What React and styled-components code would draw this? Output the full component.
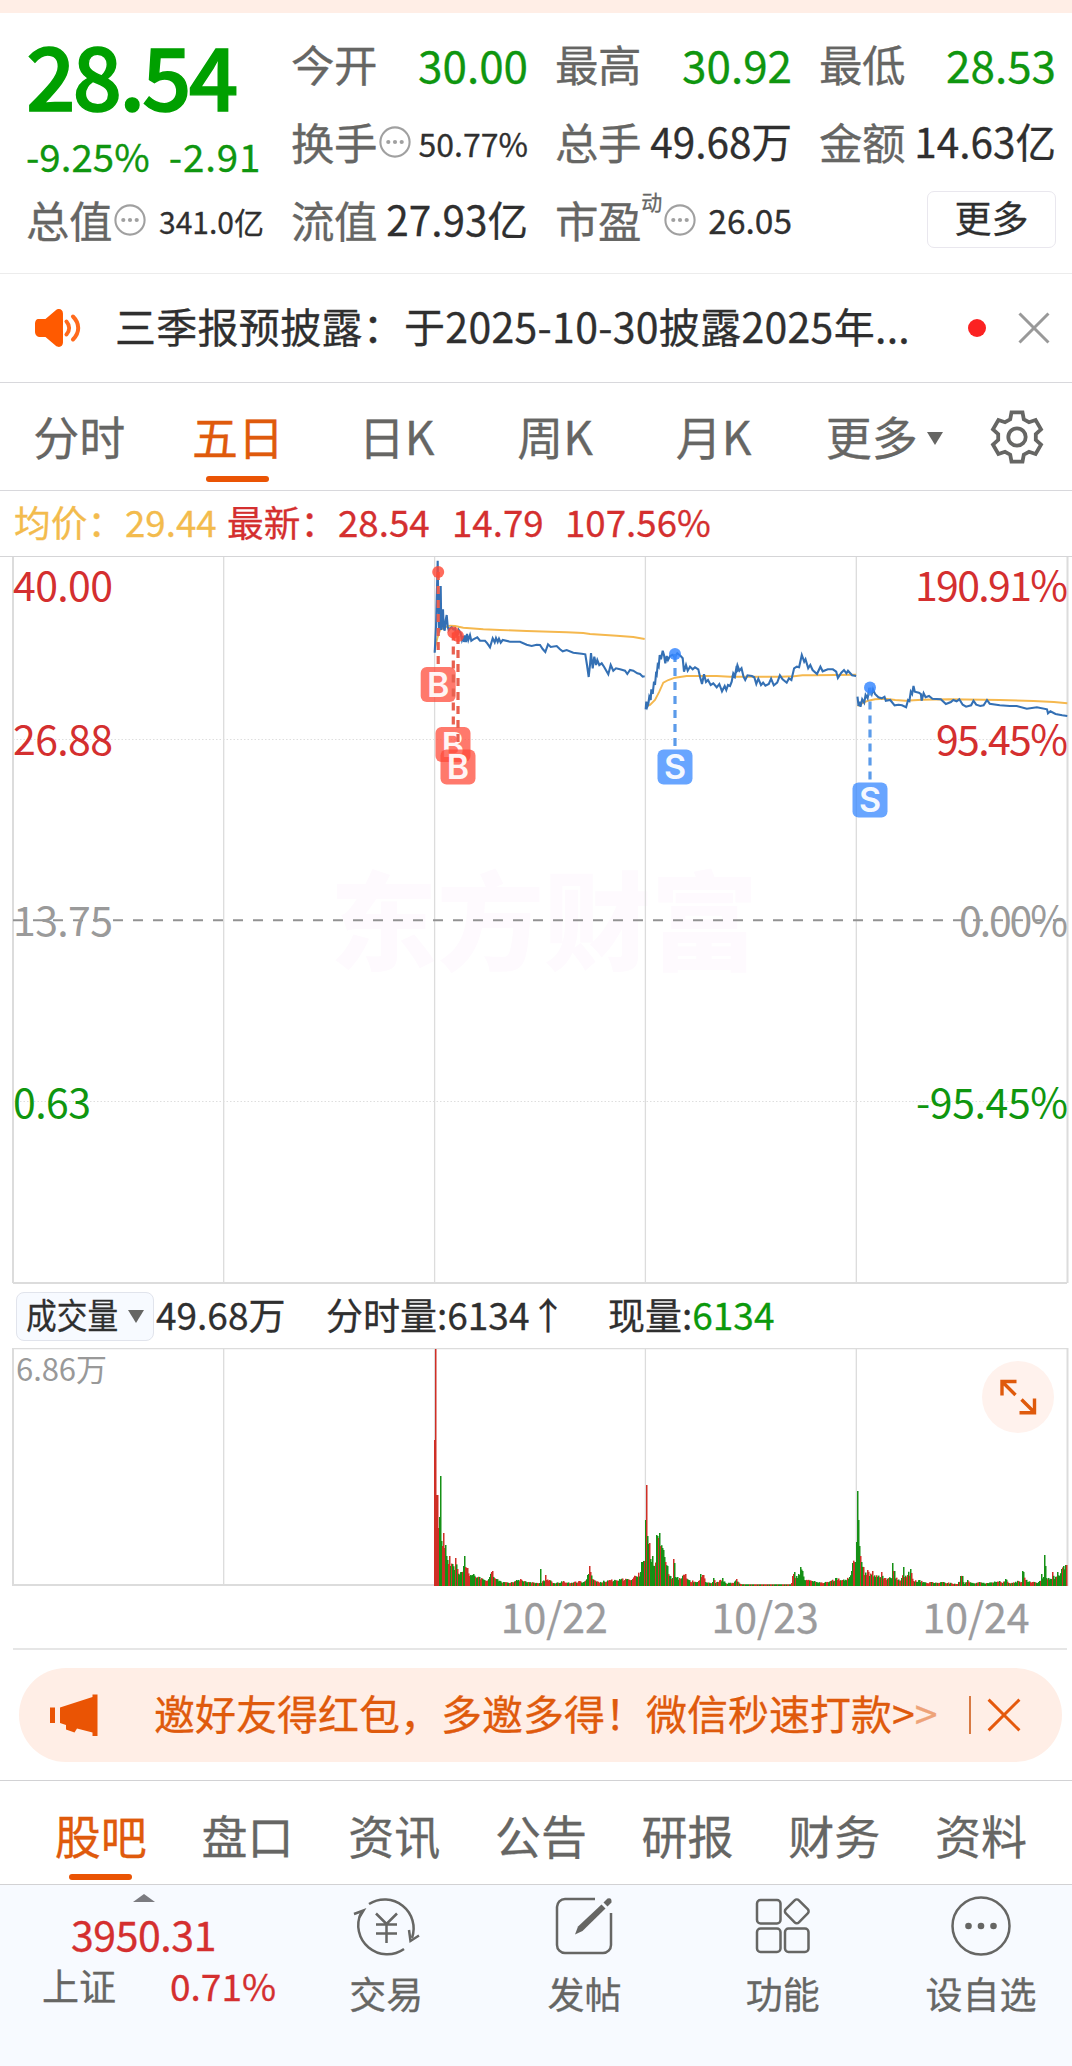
import React from "react";
import styled, { createGlobalStyle } from "styled-components";

const GRAY = "#666664";
const INK = "#2f2f2f";
const GREEN = "#0f960f";
const RED = "#d42f2f";
const ORANGE = "#ea5404";
const SANS = '"Noto Sans CJK SC", "Noto Sans", sans-serif';

const Global = createGlobalStyle`
  * { box-sizing: border-box; }
  body { margin: 0; background: #fff; font-family: ${SANS}; }
`;

const Page = styled.main`
  width: 1072px;
  height: 2066px;
  display: flex;
  flex-direction: column;
  overflow: hidden;
  background: #fff;
  color: ${INK};
  line-height: 1;
  white-space: nowrap;
  -webkit-text-stroke: 0.3px currentColor;
`;

const TopBand = styled.div`
  height: 13px;
  background: #ffeee6;
`;

/* ---------- quote ---------- */
const Quote = styled.section`
  height: 261px;
  padding: 11.5px 0 0 26px;
  border-bottom: 1px solid #ececec;
  display: grid;
  grid-template-columns: 238px repeat(3, 237px);
  grid-template-rows: repeat(3, 78px);
  column-gap: 27px;
`;

const PriceBlock = styled.div`
  grid-row: span 2;
  display: flex;
  flex-direction: column;
`;

const Price = styled.div`
  margin-top: 5.5px;
  font-size: 87px;
  font-weight: 500;
  letter-spacing: -3px;
  color: #00a000;
  -webkit-text-stroke: 1.4px #00a000;
`;

const Change = styled.div`
  display: flex;
  gap: 19px;
  margin-top: 18.5px;
  font-size: 38.5px;
  color: ${GREEN};
`;

const ChangeAmount = styled.span`
  letter-spacing: 0.9px;
`;

const Cell = styled.div`
  display: flex;
  align-items: center;
`;

const Label = styled.span`
  font-size: 43.5px;
  letter-spacing: -0.4px;
  color: ${GRAY};
`;

const Value = styled.span`
  margin-left: auto;
  padding-top: ${(p) => p.$drop || 0}px;
  font-size: ${(p) => p.$size || 44}px;
  color: ${(p) => p.$color || INK};
`;

const Sup = styled.sup`
  align-self: flex-start;
  margin-top: 10px;
  font-size: 21px;
  line-height: 1;
  color: ${GRAY};
`;

const MoreButton = styled.button`
  width: 129px;
  height: 57px;
  margin-left: auto;
  padding: 0 0 4px;
  border: 1.5px solid #e9e7ee;
  border-radius: 7px;
  background: #fff;
  font: 37px ${SANS};
  line-height: 1;
  color: ${INK};
`;

const InfoSvg = styled.svg`
  width: 32px;
  height: 32px;
  margin-left: 2px;
  flex: none;
`;

const Info = () => (
  <InfoSvg viewBox="0 0 32 32">
    <circle cx="16" cy="16" r="14.6" fill="none" stroke="#a0a0a0" strokeWidth="2.1" />
    {[9.3, 16, 22.7].map((x) => <circle key={x} cx={x} cy="16" r="2.1" fill="#a0a0a0" />)}
  </InfoSvg>
);

/* ---------- notice ---------- */
const Notice = styled.section`
  height: 109px;
  border-bottom: 1px solid #d8d8dc;
  display: flex;
  align-items: center;
  padding: 0 22px 0 34px;
`;

const NoticeText = styled.div`
  margin: 0 0 6px 33px;
  width: 854px;
  font-size: 41px;
  letter-spacing: 0.3px;
`;

const RedDot = styled.i`
  width: 18px;
  height: 18px;
  margin-right: 32px;
  border-radius: 50%;
  background: #fb2222;
`;

/* ---------- tabs ---------- */
const PeriodTabs = styled.nav`
  height: 108px;
  border-bottom: 1px solid #d8d8dc;
  display: grid;
  grid-template-columns: repeat(6, 158.6px) 1fr;
`;

const SectionTabs = styled.nav`
  height: 105px;
  border-top: 1px solid #d2d2d4;
  border-bottom: 1px solid #d2d2d4;
  padding: 0 18px 0 27.5px;
  display: grid;
  grid-template-columns: repeat(7, 146.7px);
`;

const Tab = styled.div`
  display: flex;
  flex-direction: column;
  align-items: center;
  padding-top: ${(p) => p.$top}px;
  font-size: 46px;
  color: ${(p) => (p.$active ? "#df5a0c" : GRAY)};
  &::after {
    content: "";
    width: 63px;
    height: 6px;
    margin-top: ${(p) => p.$gap}px;
    border-radius: 3px;
    background: ${(p) => (p.$active ? ORANGE : "transparent")};
  }
`;

const TabText = styled.span`
  display: flex;
  align-items: center;
`;

const MoreTab = styled(Tab)`
  padding-left: 24px;
`;

const Caret = styled.i`
  width: 0;
  height: 0;
  margin-left: ${(p) => p.$gap || 9}px;
  margin-top: ${(p) => p.$drop || 0}px;
  border: 8px solid transparent;
  border-top: 13px solid ${GRAY};
  border-bottom: 0;
`;

const GearSlot = styled.div`
  display: flex;
  justify-content: flex-end;
  padding: 27px 28px 0 0;
`;

/* ---------- legend ---------- */
const Legend = styled.div`
  height: 66px;
  border-bottom: 1px solid #d5d5d7;
  padding: 0 0 5px 14px;
  display: flex;
  align-items: center;
  font-size: 36.7px;
  color: ${RED};
`;

const LegendItem = styled.span`
  width: ${(p) => p.$w}px;
  color: ${(p) => p.$color || RED};
`;

const ChartSvg = styled.svg`
  display: block;
  flex: none;
  overflow: visible;
  font-family: ${SANS};
`;

/* ---------- volume ---------- */
const VolumeHead = styled.div`
  height: 64px;
  padding: 0 0 0 16px;
  display: flex;
  align-items: center;
  font-size: 37px;
`;

const Picker = styled.div`
  width: 138px;
  height: 49px;
  border: 1.5px solid #e1e4ec;
  border-radius: 8px;
  background: #f7faff;
  display: flex;
  align-items: center;
  padding: 0 0 4px 9px;
`;

const PickerText = styled.span`
  width: 93px;
  font-size: 35.5px;
  transform: scaleX(0.865);
  transform-origin: left center;
`;

const HeadItem = styled.span`
  width: ${(p) => p.$w}px;
  padding-bottom: 4px;
  margin-left: ${(p) => p.$gap || 0}px;
`;

const GreenText = styled.span`
  color: #0b990b;
`;

const VolumePanel = styled.div`
  position: relative;
  height: 238px;
`;

const Expand = styled.button`
  position: absolute;
  top: 13px;
  left: 982px;
  width: 72px;
  height: 72px;
  padding: 0;
  border: 0;
  border-radius: 50%;
  background: #fff2ed;
`;

const Dates = styled.div`
  height: 64px;
  margin: 0 5px 0 13px;
  border-bottom: 2px solid #e6e6e6;
  display: grid;
  grid-template-columns: repeat(5, 210.9px);
  padding-left: 14px;
`;

const DateLabel = styled.span`
  padding-top: 9px;
  text-align: center;
  font-size: 41px;
  color: #9b9b9d;
`;

/* ---------- banner ---------- */
const Banner = styled.section`
  height: 94px;
  margin: 18px 10px 18px 19px;
  border-radius: 47px;
  background: #ffeee6;
  display: flex;
  align-items: center;
  padding: 0 39px 0 31px;
`;

const BannerText = styled.div`
  margin: 0 0 5px 56px;
  width: 815px;
  font-size: 41px;
  letter-spacing: 0;
  color: #df5a0c;
`;

const Faded = styled.span`
  opacity: 0.5;
`;

const Divider = styled.i`
  width: 1.5px;
  height: 38px;
  margin-right: 16px;
  background: #d87a43;
`;

/* ---------- bottom bar ---------- */
const BottomBar = styled.footer`
  flex: 1;
  background: #f7faff;
  display: grid;
  grid-template-columns: 287px repeat(4, 198.3px);
`;

const IndexBox = styled.div`
  display: flex;
  flex-direction: column;
  align-items: center;
  padding-top: 9px;
`;

const UpMark = styled.i`
  width: 0;
  height: 0;
  border: 11.5px solid transparent;
  border-bottom: 8px solid #7b7b80;
  border-top: 0;
`;

const IndexValue = styled.div`
  margin-top: 11px;
  font-size: 41px;
  letter-spacing: -0.4px;
  color: ${RED};
`;

const IndexRow = styled.div`
  align-self: stretch;
  display: flex;
  justify-content: space-between;
  margin: 13px 11px 0 42px;
  font-size: 37px;
  color: ${RED};
`;

const IndexName = styled.span`
  color: ${GRAY};
`;

const NavItem = styled.div`
  display: flex;
  flex-direction: column;
  align-items: center;
  gap: 16px;
  padding-top: 8px;
  font-size: 37px;
  color: ${GRAY};
`;

const NavIcon = styled.svg`
  width: 70px;
  height: 66px;
  fill: none;
  stroke: ${GRAY};
  stroke-width: 2.5;
`;

/* ---------- chart data ---------- */
const left = (s) => s.trim().split(/\s+/).map((p) => {
  const [x, y] = p.split(",").map(Number);
  return [400 + x / 3, 550 + y / 3];
});
const right = (s) => s.trim().split(/\s+/).map((p) => {
  const [x, y] = p.split(",").map(Number);
  return [730 + x / 2.965, 600 + y / 3];
});
const toPoints = (a) => a.map(([x, y]) => `${x.toFixed(1)},${y.toFixed(1)}`).join(" ");

const prices = [
  left(`104,308 108,230 110,150 113,32 115,160 117,248 120,150 122,108 124,240 127,200 129,178 131,235 134,242 137,210
    140,195 143,230 146,240 150,235 155,232 160,238 165,235 170,262 176,240 182,250 186,270 190,258 192,276 195,256 198,276
    201,252 205,270 210,255 214,272 220,268 232,262 240,272 255,272 262,280 270,292 278,265 284,277 288,264 293,276 297,266
    302,278 308,270 330,275 360,275 380,284 395,288 410,284 420,285 428,297 436,306 444,283 452,291 470,288 480,298 488,304
    500,300 520,308 545,311 556,313 561,345 566,381 570,345 573,309 578,355 583,320 588,345 592,330 598,345 605,340 612,350
    625,373 632,345 640,362 648,355 660,358 675,362 682,372 690,360 700,362 712,370 720,372 728,380 734,379`),
  [...left(`737,478 739,455 742,470 745,462 748,440 752,450 754,418 758,432 762,395 765,405 768,372 770,375 773,345 776,350
    779,315 783,328 788,302 792,315 796,340 800,318 804,330 810,318 818,314 824,322 832,310 842,318 848,325 852,365 858,345
    863,362 870,350 878,358 885,352 895,358 900,380 906,402 912,373 918,396 924,390 932,405 940,400 950,412 958,402 966,424
    974,408 979,420 984,405 990,408 995,395 1000,370 1005,378 1010,348 1014,360`),
  ...right(`8,228 14,232 22,196 28,212 34,205 40,230 45,240 52,226 65,228 72,232 78,252 84,236 92,255 98,248 105,257
    115,252 122,236 130,256 140,248 148,226 156,238 168,248 175,235 182,240 190,205 198,200 205,202 213,165 220,185 224,178
    232,205 238,195 245,210 258,222 268,200 275,214 290,208 305,208 315,215 320,234 330,218 338,210 345,220 350,212 362,226 374,228`)],
  right(`378,290 381,318 384,305 387,320 392,298 398,308 402,285 408,295 412,270 417,275 420,283 424,268 430,282 440,292
    450,295 458,290 462,302 475,300 488,316 500,314 510,316 522,322 528,300 532,303 536,275 540,282 544,258 548,275 560,278
    566,282 568,302 574,280 580,292 590,288 600,296 625,298 640,312 655,306 662,300 672,304 680,298 690,314 700,320 715,316
    722,302 730,314 742,318 752,316 762,300 770,311 800,316 830,318 850,318 880,326 910,322 940,328 943,340 950,334 965,342
    985,346 1000,348`),
];

const averages = [
  left(`104,305 106,290 112,265 120,240 135,232 150,227 165,228 190,233 250,238 300,240 380,243 500,247 550,249 570,252 650,257 700,261 734,267`),
  [...left(`737,470 750,465 765,450 778,425 790,398 805,390 825,383 860,378 950,378`),
  ...right(`0,230 150,230 190,229 215,226 250,226 374,224`)],
  right(`378,318 395,308 410,302 430,298 460,296 490,300 520,302 570,299 650,298 800,300 900,303 960,306 1000,310`),
];

const BUY = "#ff4a38";
const SELL = "#3385ff";
const trades = [
  { side: "B", x: 438.2, y: 572, top: 667, bx: 438.2 },
  { side: "B", x: 453.3, y: 632.5, top: 727, bx: 453 },
  { side: "B", x: 458, y: 636, top: 749.5, bx: 458 },
  { side: "S", x: 675, y: 654, top: 749.5, bx: 675 },
  { side: "S", x: 870, y: 687.5, top: 782.5, bx: 870 },
];

/* x, height, colour (r / g / mixed) */
const volume = `434,146,r 435,237,r 436,91,r 437,91,r 438,58,r 439,69,g 440,110,g 441,45,g 442,40,r 443,53,r 444,38,r 445,41,g 446,30,m
  447,26,g 449,30,r 450,20,g 452,22,g 454,16,g 455,28,r 457,17,m 461,14,g 463,20,g 464,30,g 465,19,r 467,18,r 469,10,m 473,12,g 475,9,r 479,9,g
  484,6,g 489,9,g 491,14,r 492,15,r 494,8,r 496,7,m 503,4,m 509,3,m 516,6,g 520,7,r 528,4,m 539,3,g 540,17,g 541,3,g 545,11,r 546,6,r 549,6,r
  553,3,g 563,5,r 565,3,m 579,5,r 583,4,g 587,11,g 588,12,g 589,20,r 590,14,r 592,7,m 598,4,m 609,6,r 619,7,m 627,7,g 635,10,m 640,14,g 641,24,g
  642,24,g 644,25,r 645,66,g 646,101,r 647,50,g 648,42,g 649,43,r 650,27,g 652,30,g 654,20,g 656,51,g 657,50,g 658,48,r 659,53,g 660,40,r
  662,38,g 663,36,g 664,29,g 665,24,r 667,20,g 670,10,m 672,8,g 673,27,r 674,23,g 675,9,g 679,8,m 685,12,r 688,6,m 697,4,m 700,12,g 702,11,r
  703,11,r 705,4,m 712,4,m 713,8,g 715,3,m 722,8,g 725,3,m 733,3,r 736,7,r 740,2,m 745,1.4,m 789,1.4,m 791,3,r 792,10,r 794,14,g 797,8,m 800,19,g
  802,15,g 804,6,m 814,5,g 823,3,m 835,8,g 842,6,m 849,9,g 851,15,g 852,23,g 854,24,r 855,24,g 856,44,g 857,95,g 858,66,g 859,40,g 860,30,r
  861,24,g 863,19,r 866,11,r 867,16,r 869,10,m 872,15,r 875,9,m 881,14,r 884,8,m 890,8,g 892,23,g 894,15,g 897,6,m 901,8,g 903,19,g 904,9,r
  907,11,m 910,17,g 911,13,r 913,5,m 919,6,g 926,3,m 931,4,g 943,4,m 957,2,m 960,10,g 962,10,g 964,2,m 967,6,g 971,3,m 979,4,m 987,3,g
  999,5,g 1002,3,m 1005,7,g 1009,3,m 1018,5,r 1021,4,r 1022,15,g 1023,14,g 1025,6,r 1032,4,m 1037,3,g 1041,12,g 1043,9,g 1044,31,g
  1045,20,g 1046,8,m 1051,7,m 1052,14,r 1054,7,m 1057,14,g 1059,10,g 1061,17,g 1063,20,g 1065,21,g 1066,21,r`
  .trim().split(/\s+/).map((s) => {
    const [x, h, c] = s.split(",");
    return { x: Number(x), h: Number(h), c };
  });

const noise = (n) => {
  const v = Math.sin(n * 127.1) * 43758.5453;
  return v - Math.floor(v);
};

const bars = [];
volume.forEach((p, i) => {
  const q = volume[i + 1];
  const end = q ? q.x : p.x + 1;
  for (let x = p.x; x < end; x += 1) {
    const t = (x - p.x) / (end - p.x);
    const flat = x === p.x ? p.h : Math.min(p.h + (q.h - p.h) * t, Math.min(p.h, q.h) + 3) * (0.7 + 0.4 * noise(x));
    const c = x === p.x && p.c !== "m" ? p.c : noise(x + 7) > 0.45 ? "g" : "r";
    bars.push({ x, h: Math.max(flat, 1.6), c });
  }
});

const columns = [223.7, 434.6, 645.4, 856.3];

const axis = [
  { y: 600.5, l: "40.00", r: "190.91%", c: RED, lw: 98, rw: 152 },
  { y: 755, l: "26.88", r: "95.45%", c: RED, lw: 98, rw: 131 },
  { y: 935.5, l: "13.75", r: "0.00%", c: "#9a9a9a", lw: 98, rw: 108 },
  { y: 1117.5, l: "0.63", r: "-95.45%", c: GREEN, lw: 76, rw: 151 },
];

const PriceChart = () => (
  <ChartSvg width="1072" height="727" viewBox="0 557 1072 727">
    <text x="330" y="962" fontSize="107" fontWeight="900" fill="#fefafe">东方财富</text>
    <g stroke="#dcdcdc" strokeWidth="1.3">
      {columns.map((x) => <line key={x} x1={x} x2={x} y1="557" y2="1283" />)}
      <line x1="13" x2="13" y1="557" y2="1283" strokeWidth="2" />
      <line x1="1067.5" x2="1067.5" y1="557" y2="1283" strokeWidth="2" />
      <line x1="13" x2="1067" y1="1283" y2="1283" strokeWidth="2" />
    </g>
    <g stroke="#dedede" strokeDasharray="1.5 2">
      <line x1="13" x2="1067" y1="739.5" y2="739.5" />
      <line x1="13" x2="1067" y1="1101.5" y2="1101.5" />
    </g>
    <line x1="13" x2="1067" y1="920.3" y2="920.3" stroke="#929292" strokeWidth="2" strokeDasharray="10 10" />
    {averages.map((a, i) => (
      <polyline key={i} points={toPoints(a)} fill="none" stroke="#f5b84e" strokeWidth="1.9" />
    ))}
    {prices.map((a, i) => (
      <polyline key={i} points={toPoints(a)} fill="none" stroke="#3470b4" strokeWidth="2.1" />
    ))}
    {trades.map((t, i) => {
      const c = t.side === "B" ? BUY : SELL;
      return (
        <g key={i}>
          <line x1={t.x} x2={t.x} y1={t.y} y2={t.top - 2} stroke={t.side === "B" ? "#e8604f" : "#5b9bea"} strokeWidth="3.2" strokeDasharray="8 6" />
          <circle cx={t.x} cy={t.y} r="6" fill={c} opacity="0.82" />
          <rect x={t.bx - 17.5} y={t.top} width="35" height="35" rx="6" fill={c} opacity="0.74" />
          <text x={t.bx} y={t.top + 29.5} textAnchor="middle" fontFamily="Inter, Roboto, sans-serif" fontSize="34" fontWeight="600" fill="#fff" opacity="0.93">{t.side}</text>
        </g>
      );
    })}
    <g fontSize="41">
      {axis.map((a) => (
        <g key={a.y} fill={a.c}>
          <text x="13" y={a.y} textLength={a.lw + 2}>{a.l}</text>
          <text x={1067 - a.rw} y={a.y} textLength={a.rw + 1}>{a.r}</text>
        </g>
      ))}
    </g>
  </ChartSvg>
);

const VolumeChart = () => (
  <ChartSvg width="1072" height="238" viewBox="0 1348 1072 238">
    <g stroke="#dcdcdc" strokeWidth="1.3">
      {columns.map((x) => <line key={x} x1={x} x2={x} y1="1348" y2="1586" />)}
      <line x1="13" x2="1067" y1="1348.6" y2="1348.6" />
      <line x1="13" x2="13" y1="1348" y2="1586" strokeWidth="2" />
      <line x1="1067.5" x2="1067.5" y1="1348" y2="1586" strokeWidth="2" />
      <line x1="13" x2="1067" y1="1585" y2="1585" strokeWidth="2" />
    </g>
    {bars.map((b) => (
      <rect key={b.x} x={b.x} y={1586 - b.h} width="1.5" height={b.h} fill={b.c === "r" ? "#cf2f26" : "#159015"} />
    ))}
    <text x="16" y="1381" fontSize="31" fill="#999" textLength="91">6.86万</text>
  </ChartSvg>
);

const Cross = ({ size, color, width }) => (
  <svg width={size} height={size} viewBox="0 0 32 32">
    <path d="M1.5 1.5 30.5 30.5M30.5 1.5 1.5 30.5" stroke={color} strokeWidth={width} fill="none" />
  </svg>
);

const Speaker = () => (
  <svg width="48" height="40" viewBox="0 0 48 40">
    <path d="M5 11h6.500l10-8.600c3.500-3 7.500-1 7.500 3v29.200c0 4-4 6-7.500 3L11.500 29H6.500C3 29 1 27 1 23.500v-7C1 13 2 11 5 11Z" fill="#ff5a00" />
    <path d="M32.500 13.500c3.500 4 3.500 9 0 13M39 8.500c7 7 7 16 0 23" stroke="#ff6a1c" strokeWidth="4" strokeLinecap="round" fill="none" />
  </svg>
);

/* One tooth per 60 degrees: [angle from the tooth's axis, radius] */
const tooth = [[-12.5, 25.2], [12.5, 25.2], [21, 19], [39, 19]];
const gearPath = `M${[0, 1, 2, 3, 4, 5].flatMap((k) => tooth.map(([a, r]) => {
  const t = ((k * 60 - 90 + a) * Math.PI) / 180;
  return `${(27 + r * Math.cos(t)).toFixed(1)} ${(27 + r * Math.sin(t)).toFixed(1)}`;
})).join("L")}Z`;

const Gear = () => (
  <svg width="54" height="54" viewBox="0 0 54 54" fill="none" stroke={GRAY} strokeWidth="3.8">
    <path d={gearPath} />
    <circle cx="27" cy="27" r="8.700" />
  </svg>
);

const Megaphone = () => (
  <svg width="48" height="42" viewBox="0 0 48 42" fill={ORANGE}>
    <path d="M0 13.500h5v15.500H0zM10 13.500 42.500 3V.5H47.500V42H42.500V38.500L27 34.500 24.500 38.500 16 35.500V31L10 29Z" />
  </svg>
);

const navItems = [
  {
    label: "交易",
    icon: (
      <g>
        <path d="M18 11A29 29 0 0 1 61 45M53 56A29 29 0 0 1 10 20" />
        <path d="M3 21l9.500-3.500L8.500 24M58 37l1.500 11L68 42.500" />
        <path d="M25 20.500 35.500 31 46 20.500M25 31.500H46M25 40.500H46M35.500 31V50" />
      </g>
    ),
  },
  {
    label: "发帖",
    icon: (
      <g>
        <path d="M46 6H16a8 8 0 0 0-8 8V52a8 8 0 0 0 8 8H54a8 8 0 0 0 8-8V20" />
        <path d="M26 41.500 29 33.500 52.500 11.500 56.500 15.500 33.500 38Z" fill={GRAY} stroke="none" />
        <path d="M54.500 9.500 58.500 5.500Q63 4 62.500 9.500L58.500 13.500Z" fill={GRAY} stroke="none" />
      </g>
    ),
  },
  {
    label: "功能",
    icon: (
      <g>
        <rect x="9" y="7" width="23.500" height="23.500" rx="3.500" />
        <rect x="9" y="35.500" width="23.500" height="23.500" rx="3.500" />
        <rect x="37" y="35.500" width="23.500" height="23.500" rx="3.500" />
        <rect x="39.500" y="9" width="18.500" height="18.500" rx="3" transform="rotate(45 48.700 18.300)" />
      </g>
    ),
  },
  {
    label: "设自选",
    icon: (
      <g>
        <circle cx="35" cy="33" r="28.500" />
        {[22.5, 35, 47.5].map((x) => <circle key={x} cx={x} cy="33" r="3.300" fill={GRAY} stroke="none" />)}
      </g>
    ),
  },
];

export default function App() {
  return (
    <Page>
      <Global />
      <TopBand />
      <Quote>
        <PriceBlock>
          <Price>28.54</Price>
          <Change><span>-9.25%</span><ChangeAmount>-2.91</ChangeAmount></Change>
        </PriceBlock>
        <Cell><Label>今开</Label><Value $color={GREEN}>30.00</Value></Cell>
        <Cell><Label>最高</Label><Value $color={GREEN}>30.92</Value></Cell>
        <Cell><Label>最低</Label><Value $color={GREEN}>28.53</Value></Cell>
        <Cell><Label>换手</Label><Info /><Value $size={32} $drop={2}>50.77%</Value></Cell>
        <Cell><Label>总手</Label><Value $size={40.5}>49.68万</Value></Cell>
        <Cell><Label>金额</Label><Value $size={40.5}>14.63亿</Value></Cell>
        <Cell><Label>总值</Label><Info /><Value $size={30} $drop={2}>341.0亿</Value></Cell>
        <Cell><Label>流值</Label><Value $size={40.5}>27.93亿</Value></Cell>
        <Cell><Label>市盈</Label><Sup>动</Sup><Info /><Value $size={33.5} $drop={1}>26.05</Value></Cell>
        <Cell><MoreButton>更多</MoreButton></Cell>
      </Quote>
      <Notice>
        <Speaker />
        <NoticeText>三季报预披露：于2025-10-30披露2025年...</NoticeText>
        <RedDot />
        <Cross size={32} color="#999" width={3} />
      </Notice>
      <PeriodTabs>
        {["分时", "五日", "日K", "周K", "月K"].map((t) => (
          <Tab key={t} $top={29} $gap={18} $active={t === "五日"}><TabText>{t}</TabText></Tab>
        ))}
        <MoreTab $top={29}><TabText>更多<Caret $drop={6} /></TabText></MoreTab>
        <GearSlot><Gear /></GearSlot>
      </PeriodTabs>
      <Legend>
        <LegendItem $w={111} $color="#f3bb4d">均价：</LegendItem>
        <LegendItem $w={102} $color="#f3bb4d">29.44</LegendItem>
        <LegendItem $w={111}>最新：</LegendItem>
        <LegendItem $w={114}>28.54</LegendItem>
        <LegendItem $w={113}>14.79</LegendItem>
        <LegendItem $w={160}>107.56%</LegendItem>
      </Legend>
      <PriceChart />
      <VolumeHead>
        <Picker><PickerText>成交量</PickerText><Caret $gap={9} $drop={4} /></Picker>
        <HeadItem $w={170} $gap={2}>49.68万</HeadItem>
        <HeadItem $w={282}>分时量:6134↑</HeadItem>
        <HeadItem $w={200}>现量:<GreenText>6134</GreenText></HeadItem>
      </VolumeHead>
      <VolumePanel>
        <VolumeChart />
        <Expand>
          <svg width="72" height="72" viewBox="0 0 72 72" fill="none" stroke="#df5a0c" strokeWidth="3.400">
            <path d="M34.500 20.500H20V34.500M20 20.500 33.500 34M37.500 51.800H52.500V37.500M52.500 51.500 39.500 38.500" />
          </svg>
        </Expand>
      </VolumePanel>
      <Dates>
        <span /><span />
        <DateLabel>10/22</DateLabel>
        <DateLabel>10/23</DateLabel>
        <DateLabel>10/24</DateLabel>
      </Dates>
      <Banner>
        <Megaphone />
        <BannerText>邀好友得红包，多邀多得！微信秒速打款&gt;<Faded>&gt;</Faded></BannerText>
        <Divider />
        <Cross size={34} color="#e5590d" width={2.8} />
      </Banner>
      <SectionTabs>
        {["股吧", "盘口", "资讯", "公告", "研报", "财务", "资料"].map((t) => (
          <Tab key={t} $top={30} $gap={17} $active={t === "股吧"}><TabText>{t}</TabText></Tab>
        ))}
      </SectionTabs>
      <BottomBar>
        <IndexBox>
          <UpMark />
          <IndexValue>3950.31</IndexValue>
          <IndexRow><IndexName>上证</IndexName><span>0.71%</span></IndexRow>
        </IndexBox>
        {navItems.map((n) => (
          <NavItem key={n.label}>
            <NavIcon viewBox="0 0 70 66">{n.icon}</NavIcon>
            <span>{n.label}</span>
          </NavItem>
        ))}
      </BottomBar>
    </Page>
  );
}
